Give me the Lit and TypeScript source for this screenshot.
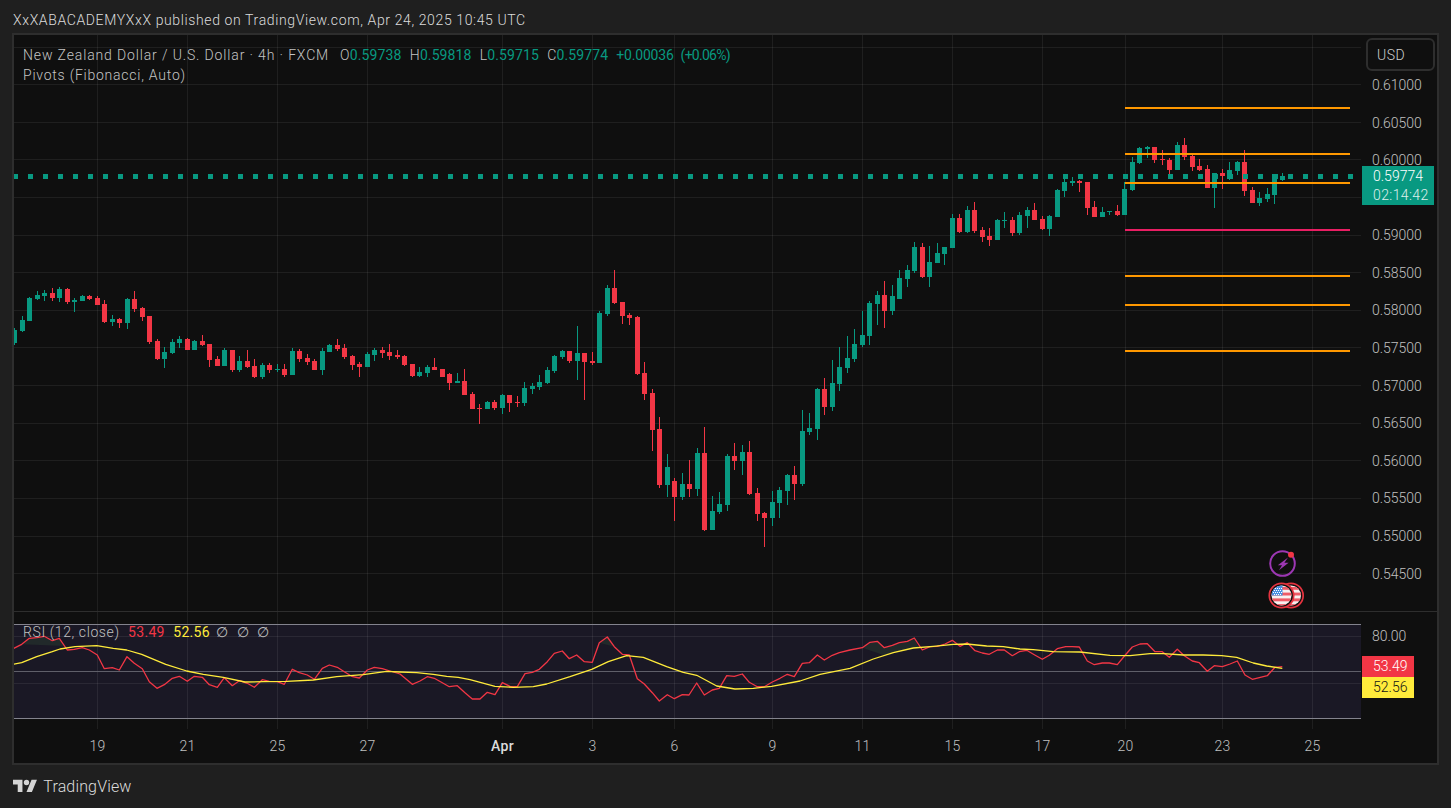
import { LitElement, html, css, svg } from "lit";
import { customElement } from "lit/decorators.js";

type C = [number, number, number, number, number];
const G = 1, R = 0;
// [color, bodyTop, bodyBottom, wickTop, wickBottom] in 3x crop units, with origin y
const groups: { oy: number; list: C[] }[] = [
  { oy: 270, list: [[G,180,219,175,225],[G,150,183,138,186],[G,84,153,81,153],[G,75,87,63,90],[G,69,78,60,93],[R,69,84,54,93],[G,57,84,51,96],[R,57,96,54,102],[G,90,96,84,126],[G,78,93,75,93],[R,78,87,75,90],[R,84,105,78,105],[R,102,156,90,159],[G,147,156,135,168],[R,147,159,144,174],[G,87,159,84,177],[R,87,117,63,126],[R,114,141,111,153],[R,138,216,138,222],[R,213,267,207,270],[G,246,267,231,294],[G,216,249,207,252],[G,207,219,198,234],[R,207,240,204,240],[G,213,240,210,240],[R,213,225,195,228],[R,222,270,222,291],[R,267,288,258,288],[G,240,288,234,288],[R,240,300,240,306],[G,273,300,258,306],[R,273,291,240,294],[R,288,321,267,324],[G,285,321,279,327],[R,285,300,279,309],[G,297,300,282,306],[R,297,315,282,321],[G,243,315,234,315],[R,243,267,237,276],[R,264,276,252,285],[R,273,300,267,300],[G,243,300,234,315]] },
  { oy: 260, list: [[G,255,275,252,275],[R,255,267,237,273],[R,264,291,252,297],[R,288,315,285,330],[R,312,321,306,351],[G,282,321,276,321],[G,270,285,264,303],[R,270,279,261,294],[R,276,288,252,300],[R,285,291,270,297],[R,288,315,285,318],[R,312,348,312,351],[G,336,348,321,351],[G,321,339,315,351],[R,321,330,294,330],[R,327,351,327,351],[R,342,369,339,390],[G,363,369,339,369],[R,363,405,327,405],[R,402,447,396,447],[R,444,447,432,492],[G,426,447,423,447],[R,426,444,420,450],[G,405,444,402,462],[R,405,429,405,456],[R,426,429,408,441],[G,384,429,366,438],[G,378,387,369,402],[G,366,381,345,390],[G,330,369,321,372],[G,288,333,285,339],[G,273,291,270,297],[R,273,303,273,309],[G,279,303,198,360],[R,279,306,279,420],[R,303,309,276,315],[G,159,309,153,309],[G,84,162,75,168],[R,84,129,30,132],[R,126,168,126,192],[R,165,174,159,195],[R,171,342,168,345]] },
  { oy: 260, list: [[R,339,402,306,420]] },
  { oy: 380, list: [[R,39,150,27,213],[R,147,315,111,324],[G,261,315,222,351],[R,303,351,294,423],[G,312,351,279,360],[R,312,327,240,351],[G,219,327,204,348],[R,219,450,141,453],[G,393,450,348,450],[G,372,396,336,402],[G,228,375,222,393],[R,228,243,189,270],[G,216,243,195,285],[R,216,342,183,345],[R,339,402,324,423],[R,399,414,396,501],[G,366,414,333,438],[G,330,369,321,414],[G,285,333,282,375],[R,285,312,258,360],[G,153,312,90,318],[G,144,156,99,165],[G,27,147,24,180]] },
  { oy: 190, list: [[R,597,651,564,675],[G,579,651,510,663],[G,531,582,471,603],[G,504,534,438,549],[G,462,507,417,516],[G,435,465,363,471],[G,339,438,333,465],[G,315,342,303,405],[R,315,363,273,414],[G,318,363,285,375],[G,264,327,240,327],[G,240,267,225,291],[G,171,243,156,249],[R,171,261,159,264],[G,216,261,168,291],[G,189,219,159,219],[G,171,192,171,225],[G,84,174,72,174],[R,84,126,72,129],[G,60,126,48,129],[R,60,123,36,129],[R,120,141,111,156],[R,138,150,114,168],[G,90,150,87,150],[G,90,93,66,114],[R,90,129,81,138],[G,75,129,66,135],[G,60,78,51,114],[R,60,90,39,90],[R,87,117,78,120],[G,78,117,75,138]] },
  { oy: 165, list: [[G,75,156,72,156],[G,51,78,27,96],[G,48,54,36,63],[R,48,54,45,81],[R,51,129,51,150],[R,126,156,108,156],[G,141,156,126,156],[G,138,141,138,150],[R,138,150,120,153],[G,72,150,51,150]] },
  { oy: 130, list: [[G,96,180,81,183],[G,54,99,51,102],[G,51,57,48,84],[R,51,90,51,99],[R,87,90,60,105],[R,90,120,84,132],[G,45,120,36,120],[R,45,81,24,90],[R,78,111,69,123],[R,108,120,87,123],[R,117,174,105,174],[G,129,174,129,234],[R,129,138,117,177],[G,120,147,96,150],[G,96,123,93,135],[R,96,183,60,198],[R,180,219,171,219],[G,204,219,186,228],[G,192,207,174,216],[G,132,195,132,222],[G,138,150,129,153]] },
];
const candles = groups.flatMap((g) =>
  g.list.map((c) => ({ up: c[0] === G, bt: g.oy + c[1] / 3, bb: g.oy + c[2] / 3, wt: g.oy + c[3] / 3, wb: g.oy + c[4] / 3 }))
);

const toPts = (ox: number, oy: number, a: number[]) => {
  const out: string[] = [];
  for (let i = 0; i < a.length; i += 2) out.push(`${(ox + a[i] / 3).toFixed(1)},${(oy + a[i + 1] / 3).toFixed(1)}`);
  return out;
};
const rsiRed = [
  ...toPts(0, 610, [40,116,65,103,88,85,110,83,133,79,157,92,178,85,202,120,223,118,247,113,268,120,292,135,313,176,337,173,358,180,381,140,403,160,427,176,448,215,471,235,493,224,517,205,538,199,562,214,583,199,607,202,628,224,652,232,673,203,697,227,718,212,742,220,763,232,787,209,808,214,832,215,853,223,877,178,898,188,922,195,943,208,967,175,988,165,1012,172,1033,185,1055,199,1078,204,1102,180,1123,172,1147,176,1170,183]),
  ...toPts(400, 620, [0,162,37,193,60,183,82,170,103,175,127,188,148,200,172,197,195,218,217,237,240,237,262,217,285,224,307,188,330,199,352,200,375,161,397,157,418,148,442,125,463,100,487,93,508,116,530,105,553,125,577,127,598,68,622,51,643,80,667,103,688,105,712,176,733,192,757,218,778,243,802,224,823,236,847,224,867,225,890,189,913,225,937,210,958,205,980,167,1003,169,1027,162,1048,187,1072,200,1093,200,1117,186,1140,175,1162,163,1183,170,1207,130,1228,128,1252,105,1273,120,1297,106,1318,98]),
  ...toPts(850, 620, [0,90,37,83,60,67,82,64,103,83,127,76,148,68,172,64,193,54,217,90,240,80,262,79,285,72,307,61,330,79,352,68,375,92,397,99,418,103,442,90,463,90,487,107,508,95,530,91,553,104,577,118,598,106,622,86,647,80,667,80,688,81,712,123,733,134,757,129,778,129,802,134,826,105,847,81,870,72,892,71,915,95,937,95,958,112,982,88,1003,107,1027,123,1048,128,1072,154,1093,137,1117,140,1140,132,1162,123,1185,165,1207,178,1228,173,1252,167,1275,142,1297,140]),
].join(" ");
const rsiYellow = [
  ...toPts(0, 610, [40,163,65,158,110,140,157,125,180,117,225,110,290,107,340,115,380,120,425,133,497,163,560,183,610,193,670,202,735,216,790,215,860,214,940,210,1010,200,1090,194,1160,184]),
  ...toPts(400, 620, [0,156,50,158,100,163,140,169,175,172,210,179,285,199,340,202,400,200,440,192,510,170,575,148,625,125,680,107,730,112,800,140,850,157,890,166,950,198,1005,207,1060,205,1115,199,1200,183,1260,163]),
  ...toPts(850, 620, [0,145,70,117,130,98,190,84,250,79,310,73,350,72,410,78,460,80,510,87,550,89,610,95,690,96,780,106,840,107,900,101,940,101,1000,105,1060,105,1115,107,1160,112,1210,129,1250,138,1297,145]),
].join(" ");
const fills = [
  toPts(0, 610, [65,103,88,85,110,83,133,79,157,92,178,85,195,108]).join(" "),
  toPts(400, 620, [598,68,622,51,643,80]).join(" "),
  toPts(850, 620, [37,83,60,67,82,64,103,83,127,76,148,68,172,64,193,54,205,80,100,105]).join(" "),
];

const gridX = [97, 187, 277, 367, 502, 592, 674, 772, 862, 952, 1042, 1125, 1222, 1312];
const gridY = [47, 84, 122, 159, 197, 235, 272, 310, 347, 385, 423, 460, 498, 536, 573];
const times: [string, number, boolean][] = [["19",97,false],["21",187,false],["25",277,false],["27",367,false],["Apr",502,true],["3",592,false],["6",674,false],["9",772,false],["11",862,false],["15",952,false],["17",1042,false],["20",1125,false],["23",1222,false],["25",1312,false]];
const prices: [string, number][] = [["0.61000",84],["0.60500",122],["0.60000",159],["0.59000",234],["0.58500",272],["0.58000",309],["0.57500",347],["0.57000",385],["0.56500",422],["0.56000",460],["0.55500",497],["0.55000",535],["0.54500",573]];
const pivots: [number, string][] = [[107,"#ff9800"],[153,"#ff9800"],[182,"#ff9800"],[229,"#e91e63"],[275,"#ff9800"],[304,"#ff9800"],[350,"#ff9800"]];

const flag = (cx: number, cy: number, id: string) => svg`
  <circle cx=${cx} cy=${cy} r="12.2" fill="#111" stroke="#e5333f" stroke-width="1.7"/>
  <clipPath id=${id}><circle cx=${cx} cy=${cy} r="10"/></clipPath>
  <g clip-path="url(#${id})">
    <rect x=${cx - 11} y=${cy - 11} width="22" height="22" fill="#f7f0f0"/>
    <rect x=${cx - 11} y=${cy - 8.6} width="22" height="2.9" fill="#ef5b66"/>
    <rect x=${cx - 11} y=${cy - 2.9} width="22" height="2.9" fill="#ef5b66"/>
    <rect x=${cx - 11} y=${cy + 2.9} width="22" height="2.9" fill="#ef5b66"/>
    <rect x=${cx - 11} y=${cy + 8.6} width="22" height="2.9" fill="#ef5b66"/>
  </g>`;

@customElement("app-root")
export class AppRoot extends LitElement {
  static styles = css`
    :host { display: block; width: 1451px; height: 808px; background: #1f1f1f; overflow: hidden;
      font-family: Roboto, "Liberation Sans", sans-serif; font-weight: 300; color: #c8c8c8; font-size: 13px; }
    .header { height: 33px; box-sizing: border-box; padding: 12px 0 0 13px; font-size: 14px; line-height: 16px; letter-spacing: 0.62px; color: #dcdcdc; white-space: nowrap; }
    .frame { margin-left: 12px; width: 1427px; height: 732px; box-sizing: border-box; border: 2px solid #2e2e2e; background: #0f0f0f; display: flex; flex-direction: column; }
    .row { display: flex; flex: none; position: relative; }
    .main { height: 576px; }
    .rsi { height: 117px; border-top: 1px solid #2e2e2e; }
    .plot { width: 1347px; flex: none; display: block; }
    .axis { flex: 1; position: relative; }
    .tick { position: absolute; left: 11px; transform: translateY(-50%); color: #c0c0c0; font-size: 14px; letter-spacing: -0.05px; line-height: 16px; }
    .usd { position: absolute; top: 3px; left: 5px; width: 69px; height: 33px; box-sizing: border-box; border: 2px solid #2e2e2e; border-radius: 6px; padding: 7px 0 0 9px; font-size: 14px; line-height: 16px; letter-spacing: 0.5px; color: #d0d0d0; background: #0f0f0f; }
    .tag { position: absolute; left: 1px; top: 131px; width: 72px; height: 39px; background: #089981; color: #fff; font-size: 14px; line-height: 19px; padding: 1px 0 0 11px; box-sizing: border-box; letter-spacing: 0; }
    .tag .cd { opacity: 0.85; letter-spacing: 0.4px; }
    .chip { position: absolute; left: 1px; width: 52px; height: 21px; box-sizing: border-box; padding: 2px 0 0 11px; font-size: 14px; line-height: 17px; letter-spacing: 0; }
    .chip.r { top: 44px; background: #f23645; color: #fff; }
    .chip.y { top: 65px; background: #ffeb3b; color: #131313; }
    .legend { position: absolute; left: 9px; top: 10px; font-size: 14px; line-height: 20px; letter-spacing: 0.3px; color: #c4c4c4; white-space: nowrap; }
    .legend .line { display: flex; }
    .name { letter-spacing: 0.86px; }
    .pv { letter-spacing: 0.77px; }
    .ohlc { display: flex; margin-left: 11px; gap: 8.2px; }
    .up { color: #089981; font-weight: 400; letter-spacing: 0.1px; }
    .change { display: flex; gap: 7px; margin-left: 0; }
    .plus { letter-spacing: -0.2px; }
    .pct { letter-spacing: -0.75px; }
    .rsi-legend { position: absolute; left: 9px; top: 11px; font-size: 14px; line-height: 18px; letter-spacing: 0.6px; color: #c0c0c0; display: flex; gap: 8.5px; white-space: nowrap; }
    .rsi-legend .red { color: #f23645; font-weight: 400; letter-spacing: 0.3px; }
    .rsi-legend .yel { color: #ffeb3b; font-weight: 400; letter-spacing: 0.3px; }
    .nils { display: flex; gap: 7.5px; margin-left: -2px; }
    .time { height: 34px; position: relative; }
    .time span { position: absolute; top: 9px; transform: translateX(-50%); color: #c0c0c0; font-size: 14px; line-height: 16px; letter-spacing: 0.3px; }
    .time span.major { color: #dcdcdc; font-weight: 500; }
    .footer { height: 43px; display: flex; align-items: center; gap: 6px; padding: 0 0 0 13px; color: #dcdcdc; font-size: 16px; letter-spacing: 0.15px; }
    .footer svg { width: 24.3px; height: 19px; fill: #d4d4d4; flex: none; }
  `;

  render() {
    const gridV = (y1: number, y2: number) => gridX.map((x) => svg`<line x1=${x + 0.5} x2=${x + 0.5} y1=${y1} y2=${y2} stroke="rgba(255,255,255,.07)"/>`);
    return html`
      <div class="header">XxXABACADEMYXxX published on TradingView.com, Apr 24, 2025 10:45 UTC</div>
      <div class="frame">
        <div class="row main">
          <svg class="plot" width="1347" height="576" viewBox="14 35 1347 576" shape-rendering="crispEdges">
            ${gridV(35, 611)}
            ${gridY.map((y) => svg`<line x1="14" x2="1361" y1=${y + 0.5} y2=${y + 0.5} stroke="rgba(255,255,255,.07)"/>`)}
            ${candles.map((c, i) => {
              const cx = 15 + 7.5 * i;
              const bx = Math.floor(cx - 2.5);
              const col = c.up ? "#089981" : "#f23645";
              return svg`<rect x=${bx + 2} y=${c.wt} width="1" height=${Math.max(c.wb - c.wt, 1)} fill=${col}/><rect x=${bx} y=${c.bt} width="5" height=${Math.max(c.bb - c.bt, 1)} fill=${col}/>`;
            })}
            ${pivots.map(([y, col]) => svg`<rect x="1125" y=${y} width="225" height="2" fill=${col}/>`)}
            <line x1="13" x2="1361" y1="176.5" y2="176.5" stroke="#089981" stroke-width="5" stroke-dasharray="5 10"/>
            <g shape-rendering="geometricPrecision">
              <circle cx="1282.5" cy="563.5" r="12.3" fill="none" stroke="#9c37b3" stroke-width="2"/>
              <path d="M1288 557.5 L1277.8 565.2 H1282 L1279 570.2 L1288.6 562.8 H1284.4 Z" fill="#9c37b3"/>
              <circle cx="1291" cy="554.7" r="3" fill="#f23645"/>
              ${flag(1291, 595.5, "f2")}
              ${flag(1281.5, 595.5, "f1")}
              <clipPath id="cn"><path d="M1270 584 h12.5 v11.5 h-12.5 z"/></clipPath>
              <circle cx="1281.5" cy="595.5" r="10" fill="#4a90e2" clip-path="url(#cn)"/>
              <g fill="#fff">
                ${[[1275,588],[1277,588],[1279,588],[1281,588],[1274,590],[1276,590],[1278,590],[1280,590],[1273,592],[1275,592],[1277,592],[1279,592],[1281,592],[1274,594],[1276,594],[1278,594],[1280,594]].map(([x, y]) => svg`<rect x=${x} y=${y} width="1" height="1"/>`)}
              </g>
            </g>
          </svg>
          <div class="axis">
            <div class="usd">USD</div>
            ${prices.map(([t, y]) => html`<div class="tick" style="top:${y - 35 + 0.5}px">${t}</div>`)}
            <div class="tag"><div>0.59774</div><div class="cd">02:14:42</div></div>
          </div>
          <div class="legend">
            <div class="line">
              <span class="name">New Zealand Dollar / U.S. Dollar · 4h · FXCM</span>
              <span class="ohlc">
                <span>O<span class="up">0.59738</span></span>
                <span>H<span class="up">0.59818</span></span>
                <span>L<span class="up">0.59715</span></span>
                <span>C<span class="up">0.59774</span></span>
                <span class="up change"><span class="plus">+0.00036</span><span class="pct">(+0.06%)</span></span>
              </span>
            </div>
            <div class="line pv">Pivots (Fibonacci, Auto)</div>
          </div>
        </div>
        <div class="row rsi">
          <svg class="plot" width="1347" height="117" viewBox="14 612 1347 117" shape-rendering="crispEdges">
            <rect x="14" y="624" width="1347" height="95" fill="#1a1825"/>
            ${gridV(612, 729)}
            <line x1="14" x2="1361" y1="636.5" y2="636.5" stroke="rgba(255,255,255,.07)"/>
            <line x1="14" x2="1361" y1="683.5" y2="683.5" stroke="rgba(255,255,255,.07)"/>
            <line x1="14" x2="1361" y1="624.5" y2="624.5" stroke="#83838d"/>
            <line x1="14" x2="1361" y1="671.5" y2="671.5" stroke="#5f5f69"/>
            <line x1="14" x2="1361" y1="718.5" y2="718.5" stroke="#83838d"/>
            <g shape-rendering="geometricPrecision">
              ${fills.map((p) => svg`<polygon points=${p} fill="#21292a"/>`)}
              <polyline points=${rsiRed} fill="none" stroke="#f23645" stroke-width="1.3" stroke-linejoin="round"/>
              <polyline points=${rsiYellow} fill="none" stroke="#ffeb3b" stroke-width="1.3" stroke-linejoin="round"/>
            </g>
          </svg>
          <div class="axis">
            <div class="tick" style="top:24px">80.00</div>
            <div class="chip r">53.49</div>
            <div class="chip y">52.56</div>
          </div>
          <div class="rsi-legend">
            <span>RSI (12, close)</span>
            <span class="red">53.49</span>
            <span class="yel">52.56</span>
            <span class="nils"><span>∅</span><span>∅</span><span>∅</span></span>
          </div>
        </div>
        <div class="row time">
          ${times.map(([t, x, m]) => html`<span class=${m ? "major" : ""} style="left:${x - 14 + 0.5}px">${t}</span>`)}
        </div>
      </div>
      <div class="footer">
        <svg viewBox="0 0 36 28"><path d="M14 22H7V11H0V4h14v18zM28 22h-8l7.5-18h8L28 22z"/><circle cx="20" cy="8" r="4"/></svg>
        <span>TradingView</span>
      </div>
    `;
  }
}
